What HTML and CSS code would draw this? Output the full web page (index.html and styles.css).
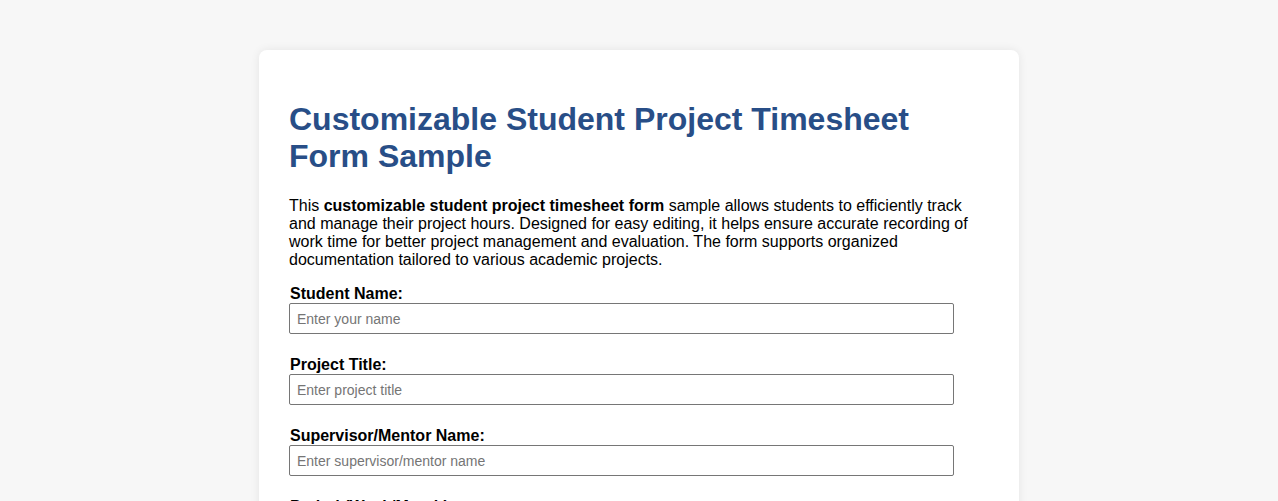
FILE: index.html
```html
<!DOCTYPE html>
<html lang="en">
<head>
<meta charset="utf-8">
<title>Customizable Student Project Timesheet Form Sample</title>
<link rel="stylesheet" href="styles.css">
</head>
<body>
<main class="card">
  <h1 class="title">Customizable Student Project Timesheet Form Sample</h1>
  <p class="intro">This <strong>customizable student project timesheet form</strong> sample allows students to efficiently track and manage their project hours. Designed for easy editing, it helps ensure accurate recording of work time for better project management and evaluation. The form supports organized documentation tailored to various academic projects.</p>
  <form class="form">
    <div class="field">
      <label class="label" for="student">Student Name:</label>
      <input class="input" id="student" type="text" placeholder="Enter your name">
    </div>
    <div class="field">
      <label class="label" for="project">Project Title:</label>
      <input class="input" id="project" type="text" placeholder="Enter project title">
    </div>
    <div class="field">
      <label class="label" for="mentor">Supervisor/Mentor Name:</label>
      <input class="input" id="mentor" type="text" placeholder="Enter supervisor/mentor name">
    </div>
    <div class="field">
      <label class="label" for="period">Period (Week/Month):</label>
      <input class="input" id="period" type="text" placeholder="Enter period">
    </div>
  </form>
</main>
</body>
</html>
```
FILE: styles.css
```css
html, body {
  margin: 0;
  padding: 0;
}
body {
  background: #f7f7f7;
  font-family: "Liberation Sans", Arial, sans-serif;
  color: #000;
  padding: 50px 0;
}
.card {
  width: 760px;
  box-sizing: border-box;
  margin: 0 auto;
  background: #fff;
  border-radius: 8px;
  box-shadow: 0 0 10px rgba(0, 0, 0, 0.08);
  padding: 30px;
}
.title {
  font-size: 32px;
  font-weight: bold;
  color: #284e87;
  margin: 21px 0 22px;
}
.intro {
  font-size: 16px;
  margin: 16px 0 16px;
}
.form {
  margin: 0;
}
.field {
  margin-bottom: 22px;
}
.label {
  display: block;
  font-size: 16px;
  font-weight: bold;
  padding-left: 1px;
  margin-bottom: 0;
}
.input {
  display: block;
  box-sizing: border-box;
  width: 95%;
  height: 31px;
  padding: 0 7px;
  margin: 0;
  border: 1px solid #767676;
  border-radius: 2px;
  font-family: "Liberation Sans", Arial, sans-serif;
  font-size: 14px;
  color: #000;
  background: #fff;
}
.input::placeholder {
  color: #757575;
}
```
